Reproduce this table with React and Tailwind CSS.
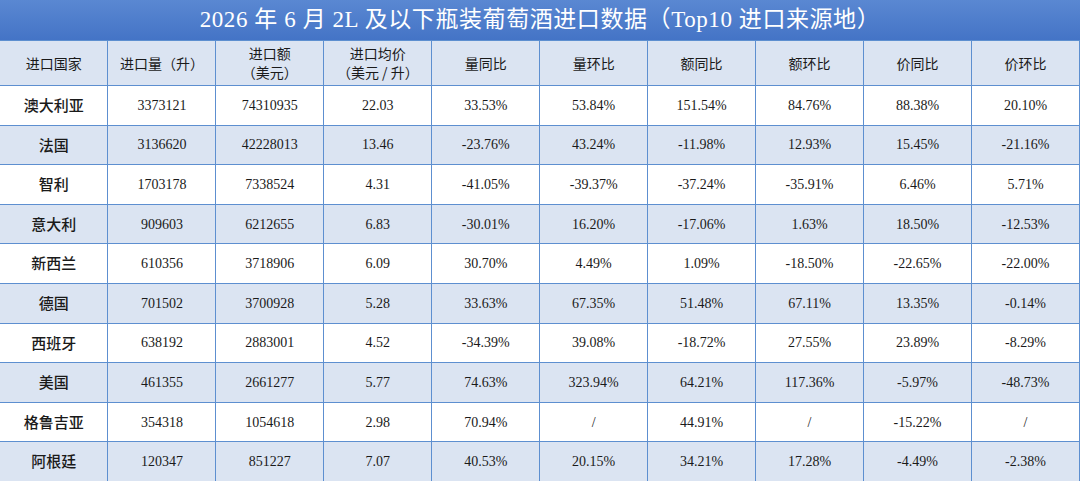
const headers = [
  ['进口国家'],
  ['进口量（升）'],
  ['进口额', '（美元）'],
  ['进口均价', '（美元 / 升）'],
  ['量同比'],
  ['量环比'],
  ['额同比'],
  ['额环比'],
  ['价同比'],
  ['价环比'],
]

const rows = [
  ['澳大利亚', '3373121', '74310935', '22.03', '33.53%', '53.84%', '151.54%', '84.76%', '88.38%', '20.10%'],
  ['法国', '3136620', '42228013', '13.46', '-23.76%', '43.24%', '-11.98%', '12.93%', '15.45%', '-21.16%'],
  ['智利', '1703178', '7338524', '4.31', '-41.05%', '-39.37%', '-37.24%', '-35.91%', '6.46%', '5.71%'],
  ['意大利', '909603', '6212655', '6.83', '-30.01%', '16.20%', '-17.06%', '1.63%', '18.50%', '-12.53%'],
  ['新西兰', '610356', '3718906', '6.09', '30.70%', '4.49%', '1.09%', '-18.50%', '-22.65%', '-22.00%'],
  ['德国', '701502', '3700928', '5.28', '33.63%', '67.35%', '51.48%', '67.11%', '13.35%', '-0.14%'],
  ['西班牙', '638192', '2883001', '4.52', '-34.39%', '39.08%', '-18.72%', '27.55%', '23.89%', '-8.29%'],
  ['美国', '461355', '2661277', '5.77', '74.63%', '323.94%', '64.21%', '117.36%', '-5.97%', '-48.73%'],
  ['格鲁吉亚', '354318', '1054618', '2.98', '70.94%', '/', '44.91%', '/', '-15.22%', '/'],
  ['阿根廷', '120347', '851227', '7.07', '40.53%', '20.15%', '34.21%', '17.28%', '-4.49%', '-2.38%'],
]

const cjk = { fontFamily: '"Noto Sans CJK SC", sans-serif' }
const num = { fontFamily: '"Liberation Serif", "Noto Sans CJK SC", serif' }

export default function App() {
  return (
    <div className="w-[1080px] h-[481px] overflow-hidden bg-white text-[#1a1a1a]">
      {/* 标题 */}
      <div
        className="h-[40px] bg-gradient-to-b from-[#5a88d2] to-[#4474c6] flex items-center justify-center text-white text-[23px] tracking-wide"
        style={{ fontFamily: '"Liberation Serif", "Noto Sans CJK SC", serif' }}
      >
        2026 年 6 月 2L 及以下瓶装葡萄酒进口数据（Top10 进口来源地）
      </div>

      <table className="w-full table-fixed border-collapse">
        <thead>
          <tr className="h-[45px] bg-[#dbe4f2]">
            {headers.map((h, i) => (
              <th
                key={i}
                className="border-y border-r border-[#5d8fd0] font-normal text-[14px] leading-[19px] text-center"
                style={cjk}
              >
                {h.map((line, j) => (
                  <div key={j}>{line}</div>
                ))}
              </th>
            ))}
          </tr>
        </thead>
        <tbody>
          {rows.map((r, i) => (
            <tr key={i} className={`h-[39.6px] ${i % 2 === 0 ? 'bg-white' : 'bg-[#dbe4f2]'}`}>
              {r.map((c, j) => (
                <td
                  key={j}
                  className={`border-b border-r border-[#5d8fd0] text-center ${
                    j === 0 ? 'text-[15px] font-medium' : 'text-[14px]'
                  }`}
                  style={j === 0 ? cjk : num}
                >
                  {c}
                </td>
              ))}
            </tr>
          ))}
        </tbody>
      </table>
    </div>
  )
}
